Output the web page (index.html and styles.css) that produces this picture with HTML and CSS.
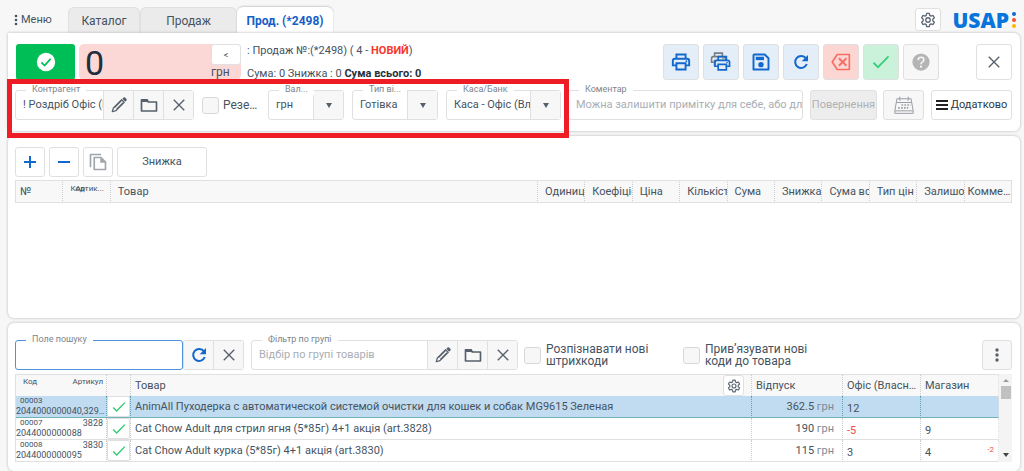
FILE: index.html
```html
<!DOCTYPE html>
<html lang="uk">
<head>
<meta charset="utf-8">
<title>USAP</title>
<link rel="stylesheet" href="styles.css">
</head>
<body>
<svg class="defs" aria-hidden="true">
  <symbol id="pencil" viewBox="0 0 24 24"><path d="M3 21l1.500-5L15.500 5l3.500 3.500L8 19.500zM6 15.500l9-9M8.500 18l9-9" fill="none" stroke="currentColor" stroke-width="1.600" stroke-linejoin="round"/><path d="M16.500 3.800l2-2q.8-.6 1.600.2l1.900 1.900q.8.800.1 1.600l-2 2z" fill="currentColor"/></symbol>
  <symbol id="folder" viewBox="0 0 24 24"><path d="M2 5h7l2 3h11v12H2z" fill="none" stroke="currentColor" stroke-width="2.200" stroke-linejoin="round"/><path d="M2 4h8l2 4H2z" fill="currentColor"/></symbol>
  <symbol id="cross" viewBox="0 0 24 24"><path d="M3 3l18 18M21 3L3 21" fill="none" stroke="currentColor" stroke-width="2.400"/></symbol>
  <symbol id="check" viewBox="0 0 24 24"><path d="M2 13l6 6L22 4.500" fill="none" stroke="currentColor" stroke-width="2.400"/></symbol>
  <symbol id="refresh" viewBox="0 0 24 24"><path d="M19.500 6.500A9 9 0 1 0 20.700 15" fill="none" stroke="currentColor" stroke-width="3"/><path d="M22.500 1.500v9.500h-9.500z" fill="currentColor"/></symbol>
  <symbol id="printer" viewBox="0 0 24 24"><path d="M6.500 8V3h11v5M6.500 16H2.200v-5.500Q2.200 8 4.700 8h14.600q2.500 0 2.500 2.500V16h-4.300M6.500 13.500h11V21h-11z" fill="none" stroke="currentColor" stroke-width="2.300"/><circle cx="18.500" cy="11" r="1.100" fill="currentColor"/></symbol>
  <symbol id="gear" viewBox="0 0 24 24"><path d="M10 2h4l.6 3.100 2 1.100 3-1 2 3.500-2.400 2.100v2.400l2.400 2.100-2 3.500-3-1-2 1.100L14 22h-4l-.6-3.100-2-1.100-3 1-2-3.500 2.400-2.100v-2.400L2.400 8.700l2-3.500 3 1 2-1.100z" fill="none" stroke="currentColor" stroke-width="2" stroke-linejoin="round"/><circle cx="12" cy="12" r="3.400" fill="none" stroke="currentColor" stroke-width="2"/></symbol>
</svg>

<header class="topbar">
  <button class="menu" type="button"><svg class="menu-dots" viewBox="0 0 4 12" fill="currentColor"><circle cx="2" cy="2" r="1.300"/><circle cx="2" cy="6" r="1.300"/><circle cx="2" cy="10" r="1.300"/></svg>Меню</button>
  <nav class="tabs">
    <button class="tab tab-catalog" type="button">Каталог</button>
    <button class="tab tab-sale" type="button">Продаж</button>
    <button class="tab tab-active" type="button">Прод. (*2498)</button>
  </nav>
  <button class="btn btn-settings" type="button" aria-label="Налаштування"><svg class="icon16"><use href="#gear"/></svg></button>
  <div class="logo">USAP<span class="logo-dots"><i class="dot dot-blue"></i><i class="dot dot-red"></i><i class="dot dot-amber"></i></span></div>
</header>

<main class="page">
  <section class="panel document">
    <div class="summary">
      <button class="confirm" type="button" aria-label="Провести">
        <svg class="icon20" viewBox="0 0 24 24"><circle cx="12" cy="12" r="11" fill="#fff"/><path d="M6.500 12.500l3.800 3.800 7.200-8" fill="none" stroke="#00be56" stroke-width="2"/></svg>
      </button>
      <div class="total"><span class="total-value">0</span><div class="total-side"><button class="btn btn-less" type="button">&lt;</button><span class="total-unit">грн</span></div></div>
      <div class="info">
        <div>: Продаж №:(*2498) ( 4 - <b class="new">НОВИЙ</b>)</div>
        <div>Сума: 0 Знижка : 0 <b class="sum">Сума всього: 0</b></div>
      </div>
      <div class="actions">
        <button class="btn action action-blue" type="button" aria-label="Друк"><svg class="icon20"><use href="#printer"/></svg></button>
        <button class="btn action action-blue" type="button" aria-label="Друк копій"><svg class="icon22" viewBox="0 0 26 26"><use href="#printer" x="0" y="0" width="20" height="20" color="#777d83"/><path d="M7 11h17v10H7z" fill="#e4eef9"/><use href="#printer" x="4" y="4" width="21" height="21"/></svg></button>
        <button class="btn action action-blue" type="button" aria-label="Зберегти"><svg class="icon18" viewBox="0 0 24 24"><path d="M3 2h14l5 5v15H2V3z" fill="none" stroke="currentColor" stroke-width="2.600" stroke-linejoin="round"/><path d="M5 5h11v4.500H5z" fill="currentColor"/><circle cx="12" cy="15.500" r="3.600" fill="currentColor"/></svg></button>
        <button class="btn action action-blue" type="button" aria-label="Оновити"><svg class="icon16"><use href="#refresh"/></svg></button>
        <button class="btn action action-red" type="button" aria-label="Видалити"><svg class="icon20" viewBox="0 0 24 24"><path d="M7.500 3H22v18H7.500L1.500 12z" fill="none" stroke="currentColor" stroke-width="2" stroke-linejoin="round"/><path d="M9.500 7.500l9 9M18.500 7.500l-9 9" stroke="currentColor" stroke-width="2.200"/></svg></button>
        <button class="btn action action-green" type="button" aria-label="Підтвердити"><svg class="icon18"><use href="#check"/></svg></button>
        <button class="btn action action-grey" type="button" aria-label="Довідка"><svg class="icon18" viewBox="0 0 24 24"><circle cx="12" cy="12" r="11.500" fill="currentColor"/><path d="M8.200 9.500Q8.300 5.700 12 5.700t3.800 3.300Q15.800 11 13.700 12.200 12 13.200 12 15" fill="none" stroke="#f7f7f7" stroke-width="2.200"/><circle cx="12" cy="18.200" r="1.500" fill="#f7f7f7"/></svg></button>
      </div>
      <button class="btn action action-close" type="button" aria-label="Закрити"><svg class="icon14"><use href="#cross"/></svg></button>
    </div>

    <div class="fields">
      <div class="field contractor">
        <label class="caption" for="contractor">Контрагент</label>
        <input class="control" id="contractor" value="! Роздріб Офіс (Власний)">
        <button class="addon" type="button" aria-label="Редагувати"><svg class="icon18"><use href="#pencil"/></svg></button>
        <button class="addon" type="button" aria-label="Вибрати"><svg class="icon18"><use href="#folder"/></svg></button>
        <button class="addon" type="button" aria-label="Очистити"><svg class="icon14"><use href="#cross"/></svg></button>
      </div>
      <label class="option reserve"><input class="tick" type="checkbox"><span class="cut">Резервувати</span></label>
      <div class="field currency"><label class="caption" for="currency">Вал...</label><select class="control" id="currency"><option>грн</option></select><span class="arrow"></span></div>
      <div class="field payment"><label class="caption" for="payment">Тип ві...</label><select class="control" id="payment"><option>Готівка</option></select><span class="arrow"></span></div>
      <div class="field cashbox"><label class="caption" for="cashbox">Каса/Банк</label><select class="control" id="cashbox"><option>Каса - Офіс (Власний)</option></select><span class="arrow"></span></div>
      <div class="field comment"><label class="caption" for="comment">Коментар</label><input class="control" id="comment" placeholder="Можна залишити примітку для себе, або для клієнта"></div>
      <button class="btn btn-return" type="button" disabled>Повернення</button>
      <button class="btn btn-calendar" type="button" aria-label="Календар"><svg class="icon20" viewBox="0 0 24 24" fill="none" stroke="currentColor" stroke-width="1.200"><path d="M3.500 4.500h17L23 19v3H1v-3zM3 9h18M1 19h22M7 2v5M17 2v5"/><path d="M9 12h11M5 15.500h12" stroke-width="2" stroke-dasharray="2 1.500"/></svg></button>
      <button class="btn btn-more" type="button"><svg class="icon12" viewBox="0 0 12 12"><path d="M0 2h12M0 6h12M0 10h12" stroke="#222" stroke-width="2"/></svg>Додатково</button>
      <div class="highlight"></div>
    </div>
  </section>

  <section class="panel lines">
    <div class="line-tools">
      <button class="btn square blue" type="button" aria-label="Додати"><svg class="icon12" viewBox="0 0 12 12"><path d="M0 6h12M6 0v12" stroke="currentColor" stroke-width="2"/></svg></button>
      <button class="btn square blue" type="button" aria-label="Прибрати"><svg class="icon12" viewBox="0 0 12 12"><path d="M0 6h12" stroke="currentColor" stroke-width="2"/></svg></button>
      <button class="btn square pale" type="button" aria-label="Копіювати"><svg class="icon18" viewBox="0 0 24 24" fill="none" stroke="currentColor" stroke-width="2.200"><path d="M2 19V2h14M7 6h9l6 6v10H7z" stroke-linejoin="round"/><path d="M15 6v7h7z" fill="currentColor" stroke="none"/></svg></button>
      <button class="btn btn-discount" type="button">Знижка</button>
    </div>
    <table class="grid lines-grid">
      <colgroup><col class="slim"><col class="slim"><col><col class="slim"><col class="slim"><col class="slim"><col class="slim"><col class="slim"><col class="slim"><col class="slim"><col class="slim"><col class="slim"><col class="slim"></colgroup>
      <thead><tr>
        <th class="first">№</th><th class="tiny"><span class="overlap"><span class="over-a">Код</span><span class="over-b">Артик...</span></span></th><th>Товар</th><th>Одиниця</th><th>Коефіцієнт</th><th>Ціна</th><th>Кількість</th><th>Сума</th><th>Знижка</th><th>Сума всього</th><th>Тип цін</th><th>Залишок</th><th class="last">Коммента</th>
      </tr></thead>
    </table>
  </section>

  <section class="panel goods">
    <div class="search-row">
      <div class="field search"><label class="caption" for="search">Поле пошуку</label><input class="control" id="search"></div>
      <div class="pair">
        <button class="addon blue" type="button" aria-label="Оновити"><svg class="icon16"><use href="#refresh"/></svg></button>
        <button class="addon" type="button" aria-label="Очистити"><svg class="icon14"><use href="#cross"/></svg></button>
      </div>
      <div class="field group">
        <label class="caption" for="group">Фільтр по групі</label>
        <input class="control" id="group" placeholder="Відбір по групі товарів">
        <button class="addon" type="button" aria-label="Редагувати"><svg class="icon18"><use href="#pencil"/></svg></button>
        <button class="addon" type="button" aria-label="Вибрати"><svg class="icon18"><use href="#folder"/></svg></button>
        <button class="addon" type="button" aria-label="Очистити"><svg class="icon14"><use href="#cross"/></svg></button>
      </div>
      <label class="option barcode"><input class="tick" type="checkbox"><span>Розпізнавати нові штрихкоди</span></label>
      <label class="option bind"><input class="tick" type="checkbox"><span>Прив’язувати нові коди до товара</span></label>
      <button class="btn square kebab" type="button" aria-label="Меню"><svg class="icon16" viewBox="0 0 16 16" fill="#56606b"><circle cx="8" cy="3" r="1.700"/><circle cx="8" cy="8" r="1.700"/><circle cx="8" cy="13" r="1.700"/></svg></button>
    </div>
    <div class="goods-box">
      <table class="grid goods-grid">
        <colgroup><col class="c91"><col class="c24"><col><col class="c91"><col class="c78"><col class="c78"></colgroup>
        <thead><tr>
          <th class="codes"><div class="code-top"><span>Код</span><span>Артикул</span></div></th><th></th>
          <th><div class="name-head"><span>Товар</span><button class="btn btn-columns" type="button" aria-label="Стовпці"><svg class="icon14"><use href="#gear"/></svg></button></div></th>
          <th>Відпуск</th><th>Офіс (Власний)</th><th>Магазин</th>
        </tr></thead>
        <tbody>
          <tr class="selected"><td class="codes"><div class="code-top"><span>00003</span></div><div class="code-bar">2044000000040,32900001</div></td><td class="pick"><button class="pick-btn" type="button" aria-label="Вибрати"><svg class="icon14"><use href="#check"/></svg></button></td><td>AnimAll Пуходерка с автоматической системой очистки для кошек и собак MG9615 Зеленая</td><td class="price">362.5 <span class="unit">грн</span></td><td class="stock">12</td><td class="stock"></td></tr>
          <tr><td class="codes"><div class="code-top"><span>00007</span><span class="article">3828</span></div><div class="code-bar">2044000000088</div></td><td class="pick"><button class="pick-btn" type="button" aria-label="Вибрати"><svg class="icon14"><use href="#check"/></svg></button></td><td>Cat Chow Adult для стрил ягня (5*85г) 4+1 акція (art.3828)</td><td class="price">190 <span class="unit">грн</span></td><td class="stock negative">-5</td><td class="stock">9</td></tr>
          <tr><td class="codes"><div class="code-top"><span>00008</span><span class="article">3830</span></div><div class="code-bar">2044000000095</div></td><td class="pick"><button class="pick-btn" type="button" aria-label="Вибрати"><svg class="icon14"><use href="#check"/></svg></button></td><td>Cat Chow Adult курка (5*85г) 4+1 акція (art.3830)</td><td class="price">115 <span class="unit">грн</span></td><td class="stock">3</td><td class="stock"><div class="split"><span>4</span><span class="reserve-count">-2</span></div></td></tr>
        </tbody>
      </table>
      <div class="scrollbar"><i class="scroll-up"></i><i class="scroll-thumb"></i><i class="scroll-down"></i></div>
    </div>
  </section>
</main>
</body>
</html>
```

FILE: styles.css
```css
* { box-sizing: border-box; }
body {
  margin: 0;
  min-height: 100vh;
  display: flex;
  flex-direction: column;
  background: #f7f7f7;
  color: #45535f;
  font: 11px/14px Roboto, "Noto Sans", sans-serif;
}
button, input, select { font: inherit; color: inherit; margin: 0; }
button { padding: 0; }
.defs { position: absolute; width: 0; height: 0; }
svg { display: block; flex: none; }
.icon12 { width: 12px; height: 12px; }
.icon14 { width: 14px; height: 14px; }
.icon16 { width: 16px; height: 16px; }
.icon18 { width: 18px; height: 18px; }
.icon20 { width: 20px; height: 20px; }
.icon22 { width: 22px; height: 22px; }

.btn {
  display: flex;
  align-items: center;
  justify-content: center;
  background: #fff;
  border: 1px solid #e0e0e0;
  border-radius: 3px;
  flex: none;
}
.blue { color: #1268cc; }
.pale { color: #a0a5aa; }

/* Top bar */
.topbar { display: flex; align-items: flex-end; height: 33px; padding: 0 8px 0 14px; flex: none; }
.menu { display: flex; align-items: center; gap: 3px; width: 54px; height: 26px; border: 0; background: none; }
.menu-dots { width: 4px; height: 12px; }
.tabs { display: flex; flex: 1; }
.tab {
  height: 26px;
  border: 1px solid #e0e0e0;
  border-bottom: 0;
  border-radius: 6px 6px 0 0;
  background: #ebebec;
  font-size: 12px;
}
.tab-catalog { width: 72px; }
.tab-sale { width: 97px; }
.tab-active { width: 96px; background: #fff; color: #1560c6; font-weight: 700; border-color: #fff; box-shadow: 0 -1px 2px #ccc; }
.btn-settings { width: 26px; height: 23px; margin-bottom: 2px; color: #5d6874; }
.logo {
  display: flex;
  align-items: center;
  gap: 3px;
  margin: 0 0 1px 11px;
  font: 800 21px/24px "Open Sans", sans-serif;
  color: #0874dc;
}
.logo-dots { display: flex; flex-direction: column; gap: 2px; }
.dot { width: 4px; height: 4px; border-radius: 2px; }
.dot-blue { background: #1268cc; }
.dot-red { background: #f4512c; }
.dot-amber { background: #ffb400; }

/* Panels */
.page { flex: 1; display: flex; flex-direction: column; gap: 5px; padding: 0 4px 0 8px; }
.panel { background: #fff; border-radius: 6px; padding: 11px 8px; box-shadow: 0 0 3px #b4b4b4; }
.document { position: relative; border-top-left-radius: 0; }

.summary { display: flex; height: 36px; }
.confirm { display: flex; align-items: center; justify-content: center; width: 59px; border: 0; border-radius: 3px; background: #00be56; }
.total { display: flex; justify-content: space-between; width: 162px; margin-left: 4px; padding-left: 6px; border-radius: 5px; background: #fbd7d5; }
.total-value { font-size: 34px; line-height: 38px; color: #1f2d3c; }
.total-side { display: flex; flex-direction: column; width: 30px; }
.btn-less { height: 21px; font-size: 9px; }
.total-unit { font-size: 12px; line-height: 14px; }
.info { display: flex; flex-direction: column; justify-content: space-between; flex: 1; padding: 0 0 0 6px; white-space: nowrap; line-height: 13px; }
.new { color: #f8362c; }
.sum { color: #26333f; }
.actions { display: flex; gap: 4px; }
.action { width: 36px; height: 36px; }
.action-blue { background: #e4eef9; color: #1268cc; }
.action-red { background: #fcd6d3; color: #f86d62; }
.action-green { background: #caf2da; color: #3ccd7b; }
.action-grey { background: #f7f7f7; color: #b4b4b4; }
.action-close { margin-left: 37px; color: #56606b; }

/* Fields */
.fields { display: flex; align-items: center; margin-top: 10px; }
.field { position: relative; display: flex; height: 30px; border: 1px solid #e0e0e0; border-radius: 3px; background: #fff; }
.caption { position: absolute; top: -8px; left: 10px; padding: 0 6px; background: #fff; font-size: 9px; line-height: 12px; color: #7d848c; white-space: nowrap; }
.control { flex: 1; min-width: 0; width: 0; padding: 0 0 0 7px; border: 0; background: none; outline: 0; appearance: none; }
.control::placeholder { color: #a9aeb4; opacity: 1; }
.addon { display: flex; align-items: center; justify-content: center; width: 30px; border: 0; border-left: 1px solid #e0e0e0; background: #f7f7f7; color: #56606b; flex: none; }
.blue.addon { color: #1268cc; }
.arrow { display: flex; align-items: center; justify-content: center; width: 30px; border-left: 1px solid #e0e0e0; background: #f7f7f7; pointer-events: none; }
.arrow::before { content: ""; border: 3px solid transparent; border-top: 5px solid #56606b; border-bottom: 0; }
.contractor { width: 179px; margin-left: -1px; }
.option { display: flex; align-items: center; font-size: 12px; line-height: 12px; }
.tick { appearance: none; width: 17px; height: 17px; border: 1px solid #d8d8d8; border-radius: 3px; background: #f7f7f7; flex: none; }
.reserve { width: 58px; margin: 0 8px; gap: 4px; line-height: 14px; }
.cut { overflow: hidden; text-overflow: ellipsis; white-space: nowrap; }
.currency { width: 76px; }
.payment { width: 86px; margin-left: 8px; }
.cashbox { width: 115px; margin-left: 8px; }
.comment { flex: 1; margin-left: 7px; }
.btn-return { width: 67px; height: 30px; margin-left: 7px; background: #ededed; color: #aeb2b6; }
.btn-calendar { width: 41px; height: 30px; margin-left: 6px; background: #f7f7f7; color: #9a9fa5; }
.btn-more { width: 81px; height: 30px; margin-left: 7px; gap: 3px; color: #2d3944; }
.highlight { position: absolute; left: -1px; top: 46px; width: 562px; height: 59px; border: 5px solid #ee1c25; pointer-events: none; z-index: 2; }

/* Document lines */
.lines { flex: 1; padding-left: 7px; }
.line-tools { display: flex; gap: 4px; }
.square { width: 30px; height: 30px; }
.btn-discount { width: 90px; height: 30px; }
.grid { width: 100%; table-layout: fixed; border-collapse: separate; border-spacing: 0; }
.grid th, .grid td { height: 22px; padding: 0 0 0 4px; font-weight: 400; text-align: left; white-space: nowrap; overflow: hidden; border-right: 1px dotted #ccc; }
.grid th { background: #f8f8f8; border-top: 1px solid #e0e0e0; }
.lines-grid { margin-top: 3px; border-left: 1px solid #e0e0e0; }
.lines-grid th { height: 23px; padding-left: 7px; border-bottom: 1px solid #e0e0e0; }
.lines-grid .first { padding-left: 4px; }
.lines-grid .last { padding-left: 3px; text-overflow: ellipsis; border-right: 1px solid #e0e0e0; }
.lines-grid .tiny { font-size: 8px; line-height: 8px; padding-bottom: 6px; }
.overlap { display: grid; }
.over-a, .over-b { grid-area: 1 / 1; }
.over-b { padding-left: 5px; }
.slim { width: 4.76%; }
.c24 { width: 24px; }
.c78 { width: 78px; }
.c91 { width: 91px; }

/* Goods */
.goods { padding: 17px 8px 9px 7px; }
.search-row { display: flex; align-items: center; }
.search { width: 168px; border-color: #4b94dd; }
.pair { display: flex; height: 30px; margin-right: 7px; border: 1px solid #e0e0e0; border-left: 0; border-radius: 3px; }
.group { width: 267px; }
.barcode { width: 151px; margin-left: 6px; gap: 5px; }
.bind { width: 142px; margin-left: 8px; gap: 5px; }
.kebab { margin-left: auto; background: #f7f7f7; }
.goods-box { display: flex; margin-top: 4px; }
.goods-grid { flex: 1; border-left: 1px solid #e0e0e0; }
.goods-grid td { border-bottom: 1px solid #e0e0e0; }
.goods-grid tr > :last-child { border-right-color: #e0e0e0; }
.goods-grid th:nth-last-child(-n+2) { text-overflow: ellipsis; }
.goods-grid .codes { padding: 0; font-size: 8px; line-height: 10px; vertical-align: top; }
.code-top { display: flex; justify-content: space-between; padding: 0 3px 0 4px; }
.code-top > span { flex: none; }
th .code-top { padding: 2px 3px 0 7px; }
.article { font-size: 9px; }
.code-bar { font-size: 9px; overflow: hidden; text-overflow: ellipsis; }
.name-head { display: flex; align-items: center; justify-content: space-between; padding-right: 7px; }
.btn-columns { width: 21px; height: 21px; color: #5d6874; }
.selected { background: #c1dbf0; }
.selected td { border-bottom-color: #72b3b6; border-right-color: #62a3b0; }
.goods-grid .pick { padding: 0; }
.pick-btn { display: flex; align-items: center; justify-content: center; width: 23px; height: 21px; border: 1px solid #e0e0e0; border-radius: 2px; background: #fff; color: #30cb75; }
.goods-grid .price { padding-right: 8px; text-align: right; }
.unit { color: #7b8a9b; }
.goods-grid .stock { padding-top: 5px; }
.goods-grid .negative, .reserve-count { color: #f64a43; }
.split { display: flex; justify-content: space-between; padding-right: 4px; }
.reserve-count { font-size: 8px; line-height: 8px; }
.scrollbar { display: flex; flex-direction: column; align-items: center; width: 13px; padding: 5px 0; background: #f4f4f4; }
.scroll-up { border: 3px solid transparent; border-top: 0; border-bottom: 3px solid #999; }
.scroll-thumb { width: 10px; height: 13px; margin-top: 4px; background: #c1c1c1; }
.scroll-down { margin-top: auto; border: 3px solid transparent; border-bottom: 0; border-top: 4px solid #444; }
```
